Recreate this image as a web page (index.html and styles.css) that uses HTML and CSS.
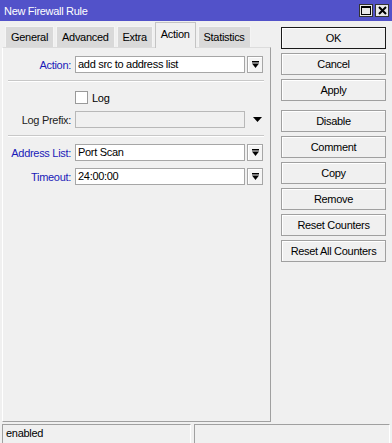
FILE: index.html
```html
<!DOCTYPE html>
<html lang="en">
  <head>
    <meta charset="UTF-8" />
    <title>New Firewall Rule</title>
    <link rel="stylesheet" href="styles.css">
  </head>
  <body>
    <div class="window">
      <!-- title bar -->
      <div class="titlebar">
        <span class="title">New Firewall Rule</span>
        <div class="win-btns">
          <span class="win-btn">
            <svg width="10" height="9" viewBox="0 0 10 9"><rect x="0.5" y="0.5" width="9" height="8" fill="none" stroke="#000"/><rect x="0" y="0" width="10" height="2" fill="#000"/></svg>
          </span>
          <span class="win-btn">
            <svg width="9" height="9" viewBox="0 0 9 9"><path d="M1 1 L8 8 M8 1 L1 8" stroke="#000" stroke-width="2"/></svg>
          </span>
        </div>
      </div>

      <div class="main">
        <div class="left">
          <div class="tabs">
            <span class="tab">General</span>
            <span class="tab">Advanced</span>
            <span class="tab">Extra</span>
            <span class="tab tab-active">Action</span>
            <span class="tab">Statistics</span>
          </div>

          <div class="panel">
            <div class="row">
              <label class="label label-blue">Action:</label>
              <div class="input">add src to address list</div>
              <span class="drop-btn"><svg width="7" height="8" viewBox="0 0 7 8"><rect x="0" y="0" width="7" height="1.5" fill="#000"/><path d="M0 2.5 H7 L3.5 7 Z" fill="#000"/></svg></span>
            </div>

            <div class="sep"></div>

            <div class="row row-check">
              <span class="checkbox"></span>
              <span class="check-text">Log</span>
            </div>

            <div class="row">
              <label class="label">Log Prefix:</label>
              <div class="input input-disabled"></div>
              <span class="arrow"><svg width="9" height="5" viewBox="0 0 9 5"><path d="M0 0 H9 L4.5 5 Z" fill="#000"/></svg></span>
            </div>

            <div class="sep"></div>

            <div class="row">
              <label class="label label-blue">Address List:</label>
              <div class="input">Port Scan</div>
              <span class="drop-btn"><svg width="7" height="8" viewBox="0 0 7 8"><rect x="0" y="0" width="7" height="1.5" fill="#000"/><path d="M0 2.5 H7 L3.5 7 Z" fill="#000"/></svg></span>
            </div>

            <div class="row">
              <label class="label label-blue">Timeout:</label>
              <div class="input">24:00:00</div>
              <span class="drop-btn"><svg width="7" height="8" viewBox="0 0 7 8"><rect x="0" y="0" width="7" height="1.5" fill="#000"/><path d="M0 2.5 H7 L3.5 7 Z" fill="#000"/></svg></span>
            </div>
          </div>
        </div>

        <!-- side buttons -->
        <div class="buttons">
          <button class="btn btn-default">OK</button>
          <button class="btn">Cancel</button>
          <button class="btn">Apply</button>
          <button class="btn btn-gap">Disable</button>
          <button class="btn">Comment</button>
          <button class="btn">Copy</button>
          <button class="btn">Remove</button>
          <button class="btn">Reset Counters</button>
          <button class="btn">Reset All Counters</button>
        </div>
      </div>

      <!-- status bar -->
      <div class="statusbar">
        <div class="status status-left">enabled</div>
        <div class="status status-right"></div>
      </div>
    </div>
  </body>
</html>
```

FILE: styles.css
```css
* {
  margin: 0;
  padding: 0;
  box-sizing: border-box;
}

body {
  background: #f0f0f0;
  font-family: "Liberation Sans", Arial, sans-serif;
  font-size: 11px;
  letter-spacing: -0.3px;
  color: #000;
}

.window {
  width: 392px;
  height: 443px;
  display: flex;
  flex-direction: column;
  overflow: hidden;
}

/* title bar */
.titlebar {
  height: 21px;
  background: #5252c9;
  display: flex;
  align-items: center;
  justify-content: space-between;
  padding: 0 3px 0 4px;
}

.title {
  color: #fff;
}

.win-btns {
  display: flex;
  gap: 2px;
}

.win-btn {
  width: 14px;
  height: 13px;
  background: #e8e8e8;
  border: 1px solid #333;
  display: flex;
  align-items: center;
  justify-content: center;
}

/* main area */
.main {
  display: flex;
  height: 401px;
}

.left {
  width: 269px;
  margin-left: 2px;
  display: flex;
  flex-direction: column;
}

.tabs {
  height: 26px;
  display: flex;
  align-items: flex-end;
  gap: 2px;
  padding-left: 3px;
}

.tab {
  height: 21px;
  padding: 0 5px;
  display: flex;
  align-items: center;
  background: #d9d9d9;
  border: 1px solid #f4f4f4;
  border-bottom: none;
}

.tab-active {
  height: 26px;
  margin-bottom: -1px;
  background: #f0f0f0;
  border-color: #c4c4c4;
  position: relative;
  z-index: 1;
  padding-bottom: 3px;
}

.panel {
  flex: 1;
  border: 1px solid #a0a0a0;
  border-top-color: #dcdcdc;
  border-left-color: #fff;
  display: flex;
  flex-direction: column;
  gap: 7px;
  padding-top: 8px;
}

.row {
  display: flex;
  align-items: center;
  height: 17px;
}

.row-check {
  height: 13px;
  margin-top: 2px;
  padding-left: 72px;
}

.label {
  width: 68px;
  text-align: right;
  margin-right: 4px;
  color: #222;
}

.label-blue {
  color: #1a1ab8;
}

.input {
  width: 170px;
  height: 17px;
  background: #fff;
  border: 1px solid #a6a6a6;
  padding-left: 2px;
  line-height: 15px;
  white-space: nowrap;
}

.input-disabled {
  background: #f0f0f0;
  border-color: #b8b8b8;
}

.drop-btn {
  width: 16px;
  height: 17px;
  margin-left: 2px;
  border: 1px solid #a6a6a6;
  background: #f4f4f4;
  box-shadow: inset 1px 1px #fff;
  display: flex;
  align-items: center;
  justify-content: center;
}

.arrow {
  width: 16px;
  margin-left: 4px;
  display: flex;
  align-items: center;
  justify-content: center;
}

.checkbox {
  width: 13px;
  height: 13px;
  background: #fff;
  border: 1px solid #9a9a9a;
}

.check-text {
  margin-left: 4px;
}

.sep {
  height: 2px;
  margin: 0 6px 0 5px;
  border-top: 1px solid #c8c8c8;
  border-bottom: 1px solid #fff;
}

/* side buttons */
.buttons {
  width: 105px;
  margin-left: 10px;
  padding-top: 6px;
  display: flex;
  flex-direction: column;
  gap: 4px;
}

.btn {
  height: 22px;
  font-family: inherit;
  font-size: 11px;
  letter-spacing: -0.3px;
  color: #000;
  background: #f0f0f0;
  border: 1px solid #a0a0a0;
  box-shadow: inset 1px 1px #fff;
}

.btn-default {
  border-color: #1a1a1a;
}

.btn-gap {
  margin-top: 5px;
}

/* status bar */
.statusbar {
  margin-top: 2px;
  height: 19px;
  display: flex;
  padding-left: 2px;
  gap: 3px;
}

.status {
  height: 19px;
  border-top: 1px solid #a0a0a0;
  border-left: 1px solid #a0a0a0;
  border-right: 1px solid #fff;
  padding: 2px 0 0 3px;
}

.status-left {
  width: 189px;
}

.status-right {
  width: 196px;
}
```
